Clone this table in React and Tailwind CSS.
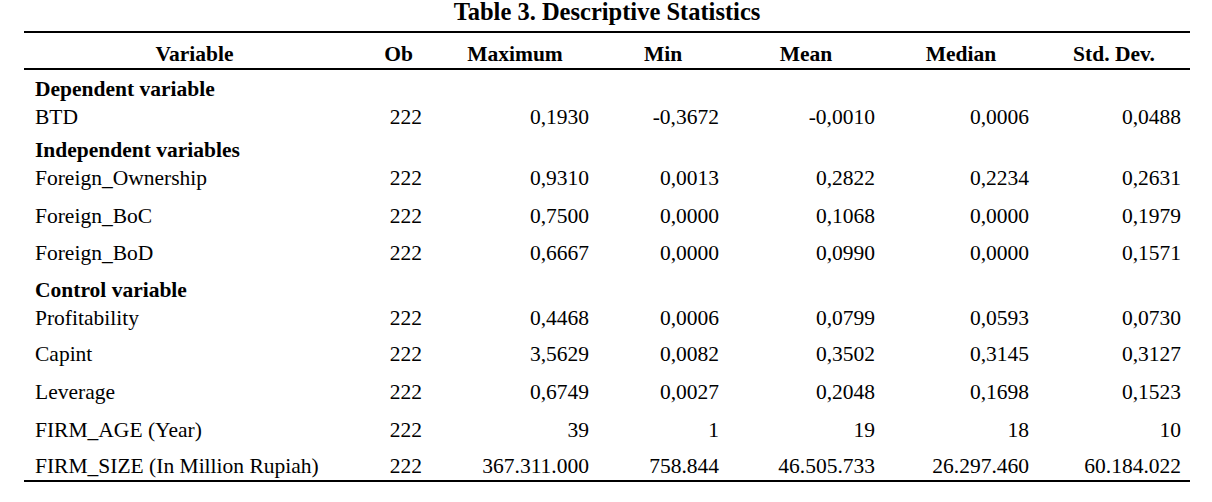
import React from "react";

const cols = "grid grid-cols-[341px_67px_166px_130px_156px_154px_152px]";

const rows = [
  { group: "Dependent variable", gmt: "mt-[5px]" },
  { name: "BTD", v: ["222", "0,1930", "-0,3672", "-0,0010", "0,0006", "0,0488"], mt: "mt-0" },
  { group: "Independent variables", gmt: "mt-[5px]" },
  { name: "Foreign_Ownership", v: ["222", "0,9310", "0,0013", "0,2822", "0,2234", "0,2631"], mt: "mt-0" },
  { name: "Foreign_BoC", v: ["222", "0,7500", "0,0000", "0,1068", "0,0000", "0,1979"], mt: "mt-[10px]" },
  { name: "Foreign_BoD", v: ["222", "0,6667", "0,0000", "0,0990", "0,0000", "0,1571"], mt: "mt-[9px]" },
  { group: "Control variable", gmt: "mt-[9px]" },
  { name: "Profitability", v: ["222", "0,4468", "0,0006", "0,0799", "0,0593", "0,0730"], mt: "mt-0" },
  { name: "Capint", v: ["222", "3,5629", "0,0082", "0,3502", "0,3145", "0,3127"], mt: "mt-[8px]" },
  { name: "Leverage", v: ["222", "0,6749", "0,0027", "0,2048", "0,1698", "0,1523"], mt: "mt-[10px]" },
  { name: "FIRM_AGE (Year)", v: ["222", "39", "1", "19", "18", "10"], mt: "mt-[10px]" },
  { name: "FIRM_SIZE (In Million Rupiah)", v: ["222", "367.311.000", "758.844", "46.505.733", "26.297.460", "60.184.022"], mt: "mt-[8px]" },
];

const headers = ["Ob", "Maximum", "Min", "Mean", "Median", "Std. Dev."];

export default function App() {
  return (
    <div className="w-[1212px] h-[502px] bg-white text-black font-['Liberation_Serif','Times_New_Roman',serif]">
      <div className="ml-[24px] w-[1166px]">
        <div className="h-[24px] leading-[24px] text-center font-bold text-[24.5px]">
          Table 3. Descriptive Statistics
        </div>
        <div className="mt-[7px] border-t-2 border-b-2 border-black">
          <div className={`${cols} h-[35px] pt-[10px] leading-[23px] font-bold text-[21.5px]`}>
            <div className="text-center">Variable</div>
            {headers.map((h) => (
              <div key={h} className="text-center">{h}</div>
            ))}
          </div>
        </div>
        <div className="border-b-2 border-black text-[21.5px] pb-0">
          {rows.map((r, i) =>
            r.group ? (
              <div key={i} className={`${r.gmt} h-[28px] leading-[28px] pl-[11px] font-bold`}>
                {r.group}
              </div>
            ) : (
              <div key={i} className={`${cols} ${r.mt} h-[28px] leading-[28px]`}>
                <div className="pl-[11px] whitespace-nowrap">{r.name}</div>
                {r.v.map((x, j) => (
                  <div key={j} className={j === 0 ? "text-right pr-[10px]" : "text-right pr-[9px]"}>
                    {x}
                  </div>
                ))}
              </div>
            )
          )}
        </div>
      </div>
    </div>
  );
}
